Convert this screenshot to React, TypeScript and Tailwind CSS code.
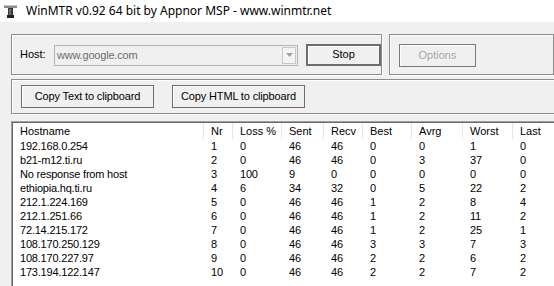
import React from "react";

const rows = [
  ["192.168.0.254", "1", "0", "46", "46", "0", "0", "1", "0"],
  ["b21-m12.ti.ru", "2", "0", "46", "46", "0", "3", "37", "0"],
  ["No response from host", "3", "100", "9", "0", "0", "0", "0", "0"],
  ["ethiopia.hq.ti.ru", "4", "6", "34", "32", "0", "5", "22", "2"],
  ["212.1.224.169", "5", "0", "46", "46", "1", "2", "8", "4"],
  ["212.1.251.66", "6", "0", "46", "46", "1", "2", "11", "2"],
  ["72.14.215.172", "7", "0", "46", "46", "1", "2", "25", "1"],
  ["108.170.250.129", "8", "0", "46", "46", "3", "3", "7", "3"],
  ["108.170.227.97", "9", "0", "46", "46", "2", "2", "6", "2"],
  ["173.194.122.147", "10", "0", "46", "46", "2", "2", "7", "2"],
];

const headers = ["Hostname", "Nr", "Loss %", "Sent", "Recv", "Best", "Avrg", "Worst", "Last"];

const cols = "grid grid-cols-[191px_29px_49px_42px_39px_49px_51px_50px_60px]";

const AppIcon: React.FC = () => (
  <svg width="13" height="14" viewBox="0 0 13 14">
    <rect x="0" y="1" width="13" height="3" fill="#8a8a8a" />
    <rect x="0" y="1" width="13" height="1" fill="#c8c8c8" />
    <rect x="4" y="4" width="5" height="8" fill="#3a3a3a" />
    <rect x="5" y="5" width="2" height="6" fill="#6a6a6a" />
    <rect x="3" y="11" width="7" height="3" fill="#202020" />
  </svg>
);

const groupBox = "border border-[#8c8c8c] shadow-[inset_1px_1px_0_#fff,1px_1px_0_#fff]";
const button =
  "flex items-center justify-center bg-[#f0f0f0] border border-[#6d6d6d] shadow-[inset_1px_1px_0_#fff] text-black";

export default function App() {
  return (
    <div className="w-[554px] h-[286px] overflow-hidden bg-[#f0f0f0] font-['Liberation_Sans',Arial,sans-serif] text-[11px] text-black flex flex-col">
      {/* title bar */}
      <div className="h-[22px] bg-white flex items-center pl-[4px] shrink-0">
        <AppIcon />
        <span className="ml-[9px] font-['Noto_Sans',sans-serif] text-[12px] text-black">
          WinMTR v0.92 64 bit by Appnor MSP - www.winmtr.net
        </span>
      </div>

      <div className="pl-[11px] pt-[12px] flex flex-col">
        {/* host + options */}
        <div className="flex gap-[7px]">
          <div className={`${groupBox} w-[377px] h-[41px] flex items-center pl-[8px]`}>
            <span className="w-[34px]">Host:</span>
            <div className="w-[244px] h-[21px] border border-[#b4b4b4] bg-[#f0f0f0] flex items-center pl-[2px] mt-[1px]">
              <span className="flex-1 text-[#6d6d6d] tracking-[-0.2px]">www.google.com</span>
              <div className="w-[14px] h-[17px] mr-[1px] border border-[#c8c8c8] bg-[#f4f4f4] flex items-center justify-center">
                <svg width="7" height="4" viewBox="0 0 7 4">
                  <path d="M0 0H7L3.5 4Z" fill="#a0a0a0" />
                </svg>
              </div>
            </div>
            <div className={`${button} ml-[8px] w-[75px] h-[22px] border-2 border-[#5a5a5a]`}>Stop</div>
          </div>
          <div className={`${groupBox} w-[200px] h-[41px] flex items-center pl-[9px]`}>
            <div className="flex items-center justify-center w-[77px] h-[23px] border border-[#7a7a7a] shadow-[inset_1px_1px_0_#fff] text-[#a0a0a0] [text-shadow:1px_1px_0_#fff] mt-[1px]">
              Options
            </div>
          </div>
        </div>

        {/* copy buttons */}
        <div className={`${groupBox} mt-[4px] w-[560px] h-[35px] flex items-center pl-[9px] gap-[18px]`}>
          <div className={`${button} w-[133px] h-[23px] tracking-[-0.15px]`}>Copy Text to clipboard</div>
          <div className={`${button} w-[133px] h-[23px] tracking-[-0.15px]`}>Copy HTML to clipboard</div>
        </div>

        {/* list view */}
        <div className="mt-[7px] w-[560px] h-[170px] bg-white border-t border-l border-[#a0a0a0] shadow-[inset_1px_1px_0_#696969] pl-[1px] pt-[1px]">
          <div className={`${cols} h-[16px]`}>
            {headers.map((h) => (
              <div key={h} className="border-r border-[#e5e5e5] pl-[7px] flex items-center leading-none">
                {h}
              </div>
            ))}
          </div>
          {rows.map((r, i) => (
            <div key={i} className={`${cols} h-[14px]`}>
              {r.map((c, j) => (
                <div key={j} className="pl-[7px] flex items-center leading-none whitespace-nowrap tracking-[-0.2px]">
                  {c}
                </div>
              ))}
            </div>
          ))}
        </div>
      </div>
    </div>
  );
}
